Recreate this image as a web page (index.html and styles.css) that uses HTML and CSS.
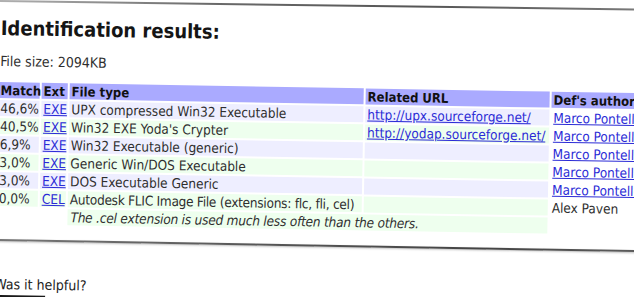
FILE: index.html
```html
<!DOCTYPE html>
<html>
<head>
<meta charset="utf-8">
<link rel="stylesheet" href="styles.css">
</head>
<body>
<div class="topline"></div>
<div class="frame">
  <h1 class="title">Identification results:</h1>
  <p class="size">File size: 2094KB</p>
  <table class="results">
    <colgroup>
      <col class="c-match"><col class="c-ext"><col class="c-type"><col class="c-url"><col class="c-author">
    </colgroup>
    <tr class="head"><th>Match</th><th>Ext</th><th>File type</th><th>Related URL</th><th class="author">Def's author</th></tr>
    <tr class="odd"><td>46,6%</td><td><a href="#">EXE</a></td><td>UPX compressed Win32 Executable</td><td><a href="#">http://upx.sourceforge.net/</a></td><td class="author"><a href="#">Marco Pontello</a></td></tr>
    <tr class="even"><td>40,5%</td><td><a href="#">EXE</a></td><td>Win32 EXE Yoda's Crypter</td><td><a href="#">http://yodap.sourceforge.net/</a></td><td class="author"><a href="#">Marco Pontello</a></td></tr>
    <tr class="odd"><td>6,9%</td><td><a href="#">EXE</a></td><td>Win32 Executable (generic)</td><td></td><td class="author"><a href="#">Marco Pontello</a></td></tr>
    <tr class="even"><td>3,0%</td><td><a href="#">EXE</a></td><td>Generic Win/DOS Executable</td><td></td><td class="author"><a href="#">Marco Pontello</a></td></tr>
    <tr class="odd"><td>3,0%</td><td><a href="#">EXE</a></td><td>DOS Executable Generic</td><td></td><td class="author"><a href="#">Marco Pontello</a></td></tr>
    <tr class="even"><td>0,0%</td><td><a href="#">CEL</a></td><td class="long">Autodesk FLIC Image File (extensions: flc, fli, cel)</td><td></td><td class="author">Alex Paven</td></tr>
    <tr class="note"><td></td><td></td><td colspan="2" class="remark">The .cel extension is used much less often than the others.</td><td class="author"></td></tr>
  </table>
  <div class="rule"></div>
  <p class="helpful">Was it helpful?</p>
  <div class="button"></div>
</div>
</body>
</html>
```
FILE: styles.css
```css
html, body {
  margin: 0;
  padding: 0;
  overflow: hidden;
  background: #ffffff;
}
body {
  width: 634px;
  height: 297px;
  font-family: "DejaVu Sans Condensed", "DejaVu Sans", sans-serif;
  font-stretch: condensed;
  color: #2e2e2e;
}
.topline {
  height: 2px;
  width: 700px;
  background: linear-gradient(to right, #b0b0b0, #6a6a6a 30%, #555 60%, #777 90%, #aaa);
  transform-origin: 0 0;
  transform: rotate(0.77deg);
}
.frame {
  width: 720px;
  margin-top: -2px;
  transform-origin: 0 0;
  transform: rotate(1deg);
}
.title {
  margin: 16px 0 0 1px;
  font-size: 20px;
  line-height: 24px;
  font-weight: bold;
  color: #151515;
}
.size {
  margin: 13px 0 0 1px;
  font-size: 14px;
  line-height: 16px;
}
.results {
  margin: 11px 0 0 -2px;
  border-collapse: separate;
  border-spacing: 2px;
  table-layout: fixed;
  width: 740px;
  font-size: 13.5px;
}
.c-match { width: 41px; }
.c-ext { width: 26px; }
.c-type { width: 294px; }
.c-url { width: 184px; }
.results th, .results td {
  height: 16px;
  padding: 1px 2px 0 2px;
  box-sizing: border-box;
  line-height: 15px;
  text-align: left;
  white-space: nowrap;
  overflow: visible;
  vertical-align: top;
}
.results th {
  background: #aaaaff;
  color: #111111;
  font-weight: bold;
  font-size: 13px;
}
.odd td { background: #eeeeff; }
.even td { background: #eeffee; }
.note td { background: transparent; }
.results td.long { letter-spacing: -0.25px; }
.note td.remark {
  background: #eeffee;
  font-style: italic;
  padding-left: 3px;
  letter-spacing: -0.2px;
}
.results td.author { background: transparent; }
.results a {
  color: #2b2bd6;
  text-decoration: underline;
}
.rule {
  margin-top: 13px;
  height: 2px;
  width: 700px;
  background: linear-gradient(to right, #777, #555 40%, #444 70%, #666);
  box-shadow: 0 1px 2px rgba(0,0,0,0.25);
}
.helpful {
  margin: 35px 0 0 -1px;
  font-size: 14px;
  line-height: 16px;
  color: #222222;
}
.button {
  margin: 3px 0 0 -1px;
  width: 51px;
  height: 3px;
  background: #1a1a1a;
}
```
